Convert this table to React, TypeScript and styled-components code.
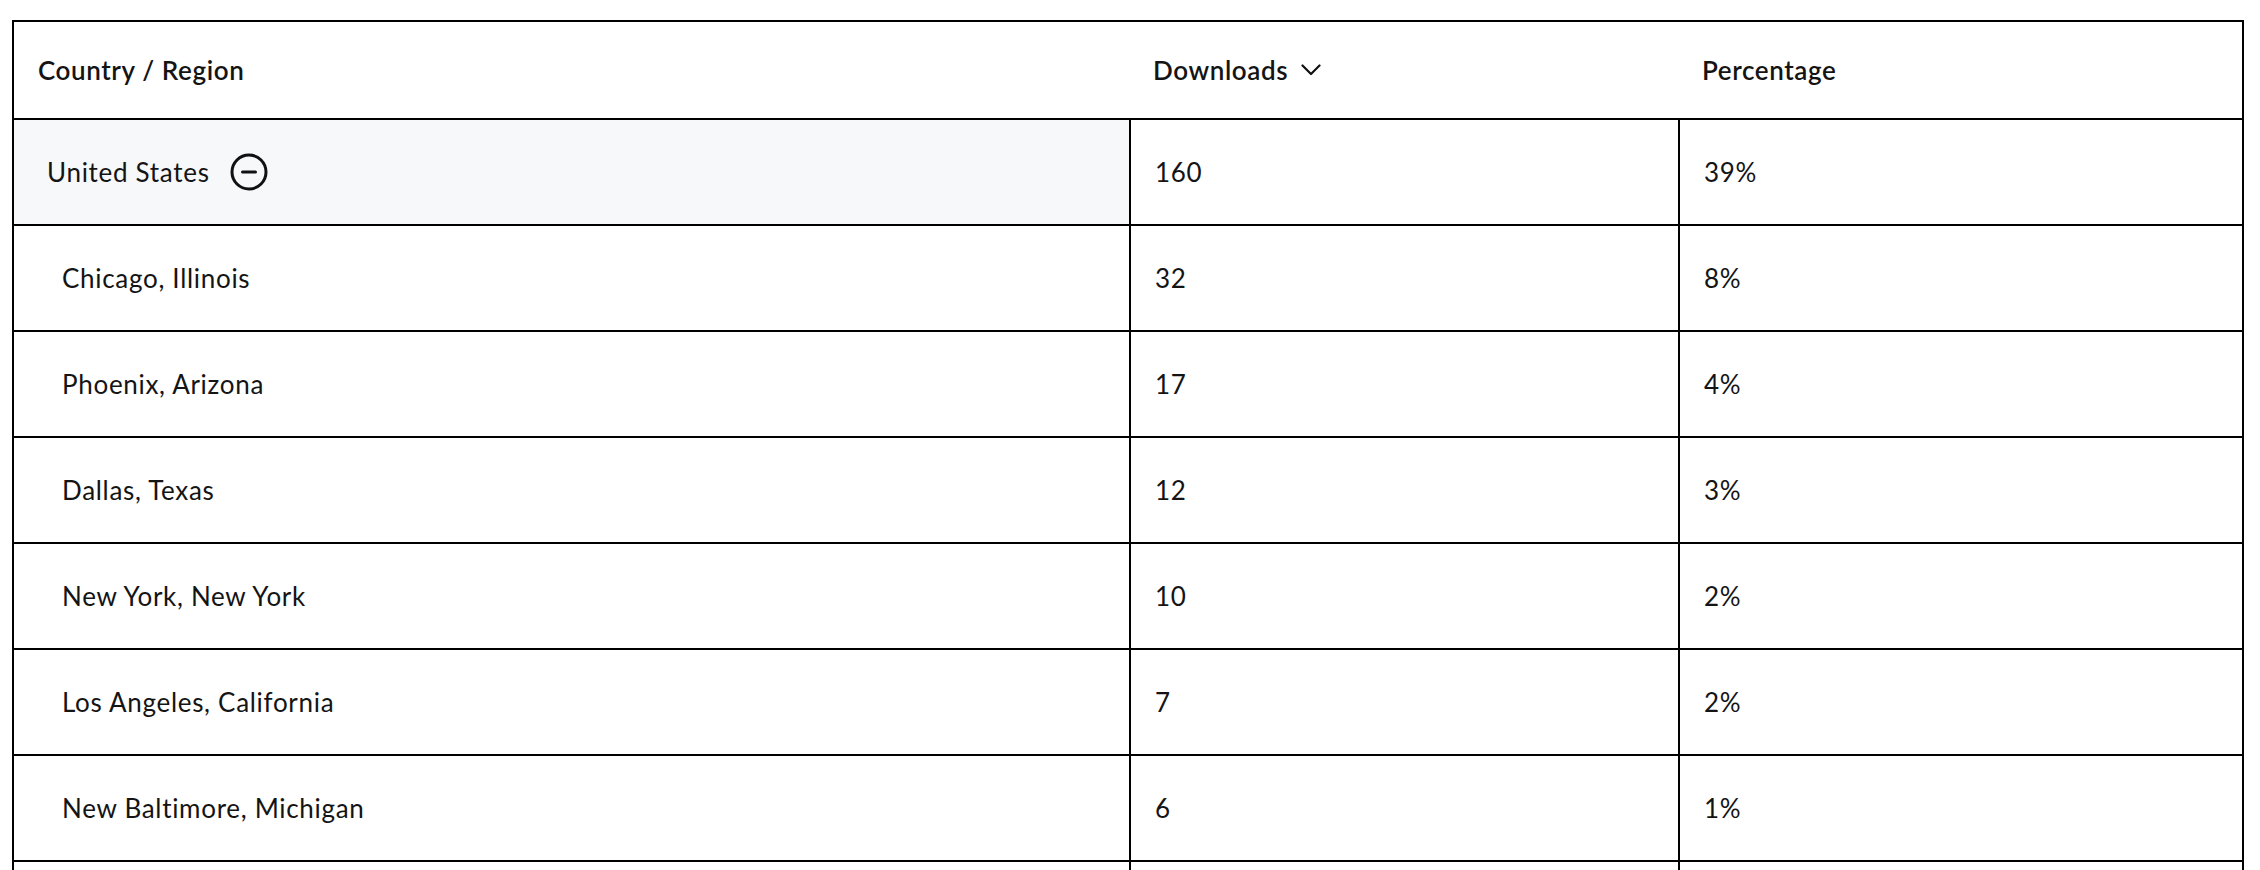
import React from 'react';
import styled, { createGlobalStyle } from 'styled-components';

const GlobalStyle = createGlobalStyle`
  body {
    margin: 0;
    background: #ffffff;
    font-family: Lato, "Open Sans", sans-serif;
    color: #141414;
  }
`;

const Page = styled.div`
  padding: 20px 16px 0 12px;
`;

const Table = styled.div`
  border: 2px solid #000;
  border-bottom: none;
`;

const Row = styled.div<{ header?: boolean }>`
  display: grid;
  grid-template-columns: 1115px 549px 1fr;
  height: ${props => props.header ? '96px' : '104px'};
  ${props => props.header ? '' : 'border-top: 2px solid #000;'}
`;

const Cell = styled.div<{ divider?: boolean; indent?: number; shaded?: boolean }>`
  display: flex;
  align-items: center;
  padding-left: ${props => props.indent ?? 24}px;
  font-size: 26px;
  letter-spacing: 0.7px;
  line-height: 1;
  ${props => props.divider ? 'border-left: 2px solid #000;' : ''}
  ${props => props.shaded ? 'background: #f7f8fa;' : ''}
`;

const HeadCell = styled(Cell)`
  font-weight: 600;
  font-size: 26px;
  letter-spacing: 0.6px;
  gap: 13px;
`;

const ToggleButton = styled.button`
  display: flex;
  align-items: center;
  justify-content: center;
  margin-left: 20px;
  padding: 0;
  border: none;
  background: none;
  color: #111;
  cursor: pointer;
`;

const ChevronDown = () => (
  <svg width="20" height="12" viewBox="0 0 20 12" fill="none">
    <path d="M1.5 1.5 L10 10 L18.5 1.5" stroke="#111" strokeWidth="2.2" strokeLinecap="round" strokeLinejoin="round" />
  </svg>
);

const MinusCircle = () => (
  <svg width="38" height="38" viewBox="0 0 38 38" fill="none">
    <circle cx="19" cy="19" r="17" stroke="currentColor" strokeWidth="3" />
    <path d="M12.5 19 H25.5" stroke="currentColor" strokeWidth="3" strokeLinecap="round" />
  </svg>
);

const cities = [
  { name: 'Chicago, Illinois', downloads: 32, pct: '8%' },
  { name: 'Phoenix, Arizona', downloads: 17, pct: '4%' },
  { name: 'Dallas, Texas', downloads: 12, pct: '3%' },
  { name: 'New York, New York', downloads: 10, pct: '2%' },
  { name: 'Los Angeles, California', downloads: 7, pct: '2%' },
  { name: 'New Baltimore, Michigan', downloads: 6, pct: '1%' },
  { name: 'Seattle, Washington', downloads: 5, pct: '1%' },
];

export default function App() {
  return (
    <Page>
      <GlobalStyle />
      <Table>
        <Row header>
          <HeadCell>Country / Region</HeadCell>
          <HeadCell>
            Downloads
            <ChevronDown />
          </HeadCell>
          <HeadCell>Percentage</HeadCell>
        </Row>

        <Row>
          <Cell shaded indent={33}>
            United States
            <ToggleButton aria-label="Collapse United States">
              <MinusCircle />
            </ToggleButton>
          </Cell>
          <Cell divider>160</Cell>
          <Cell divider>39%</Cell>
        </Row>

        {cities.map(city => (
          <Row key={city.name}>
            <Cell indent={48}>{city.name}</Cell>
            <Cell divider>{city.downloads}</Cell>
            <Cell divider>{city.pct}</Cell>
          </Row>
        ))}
      </Table>
    </Page>
  );
}
